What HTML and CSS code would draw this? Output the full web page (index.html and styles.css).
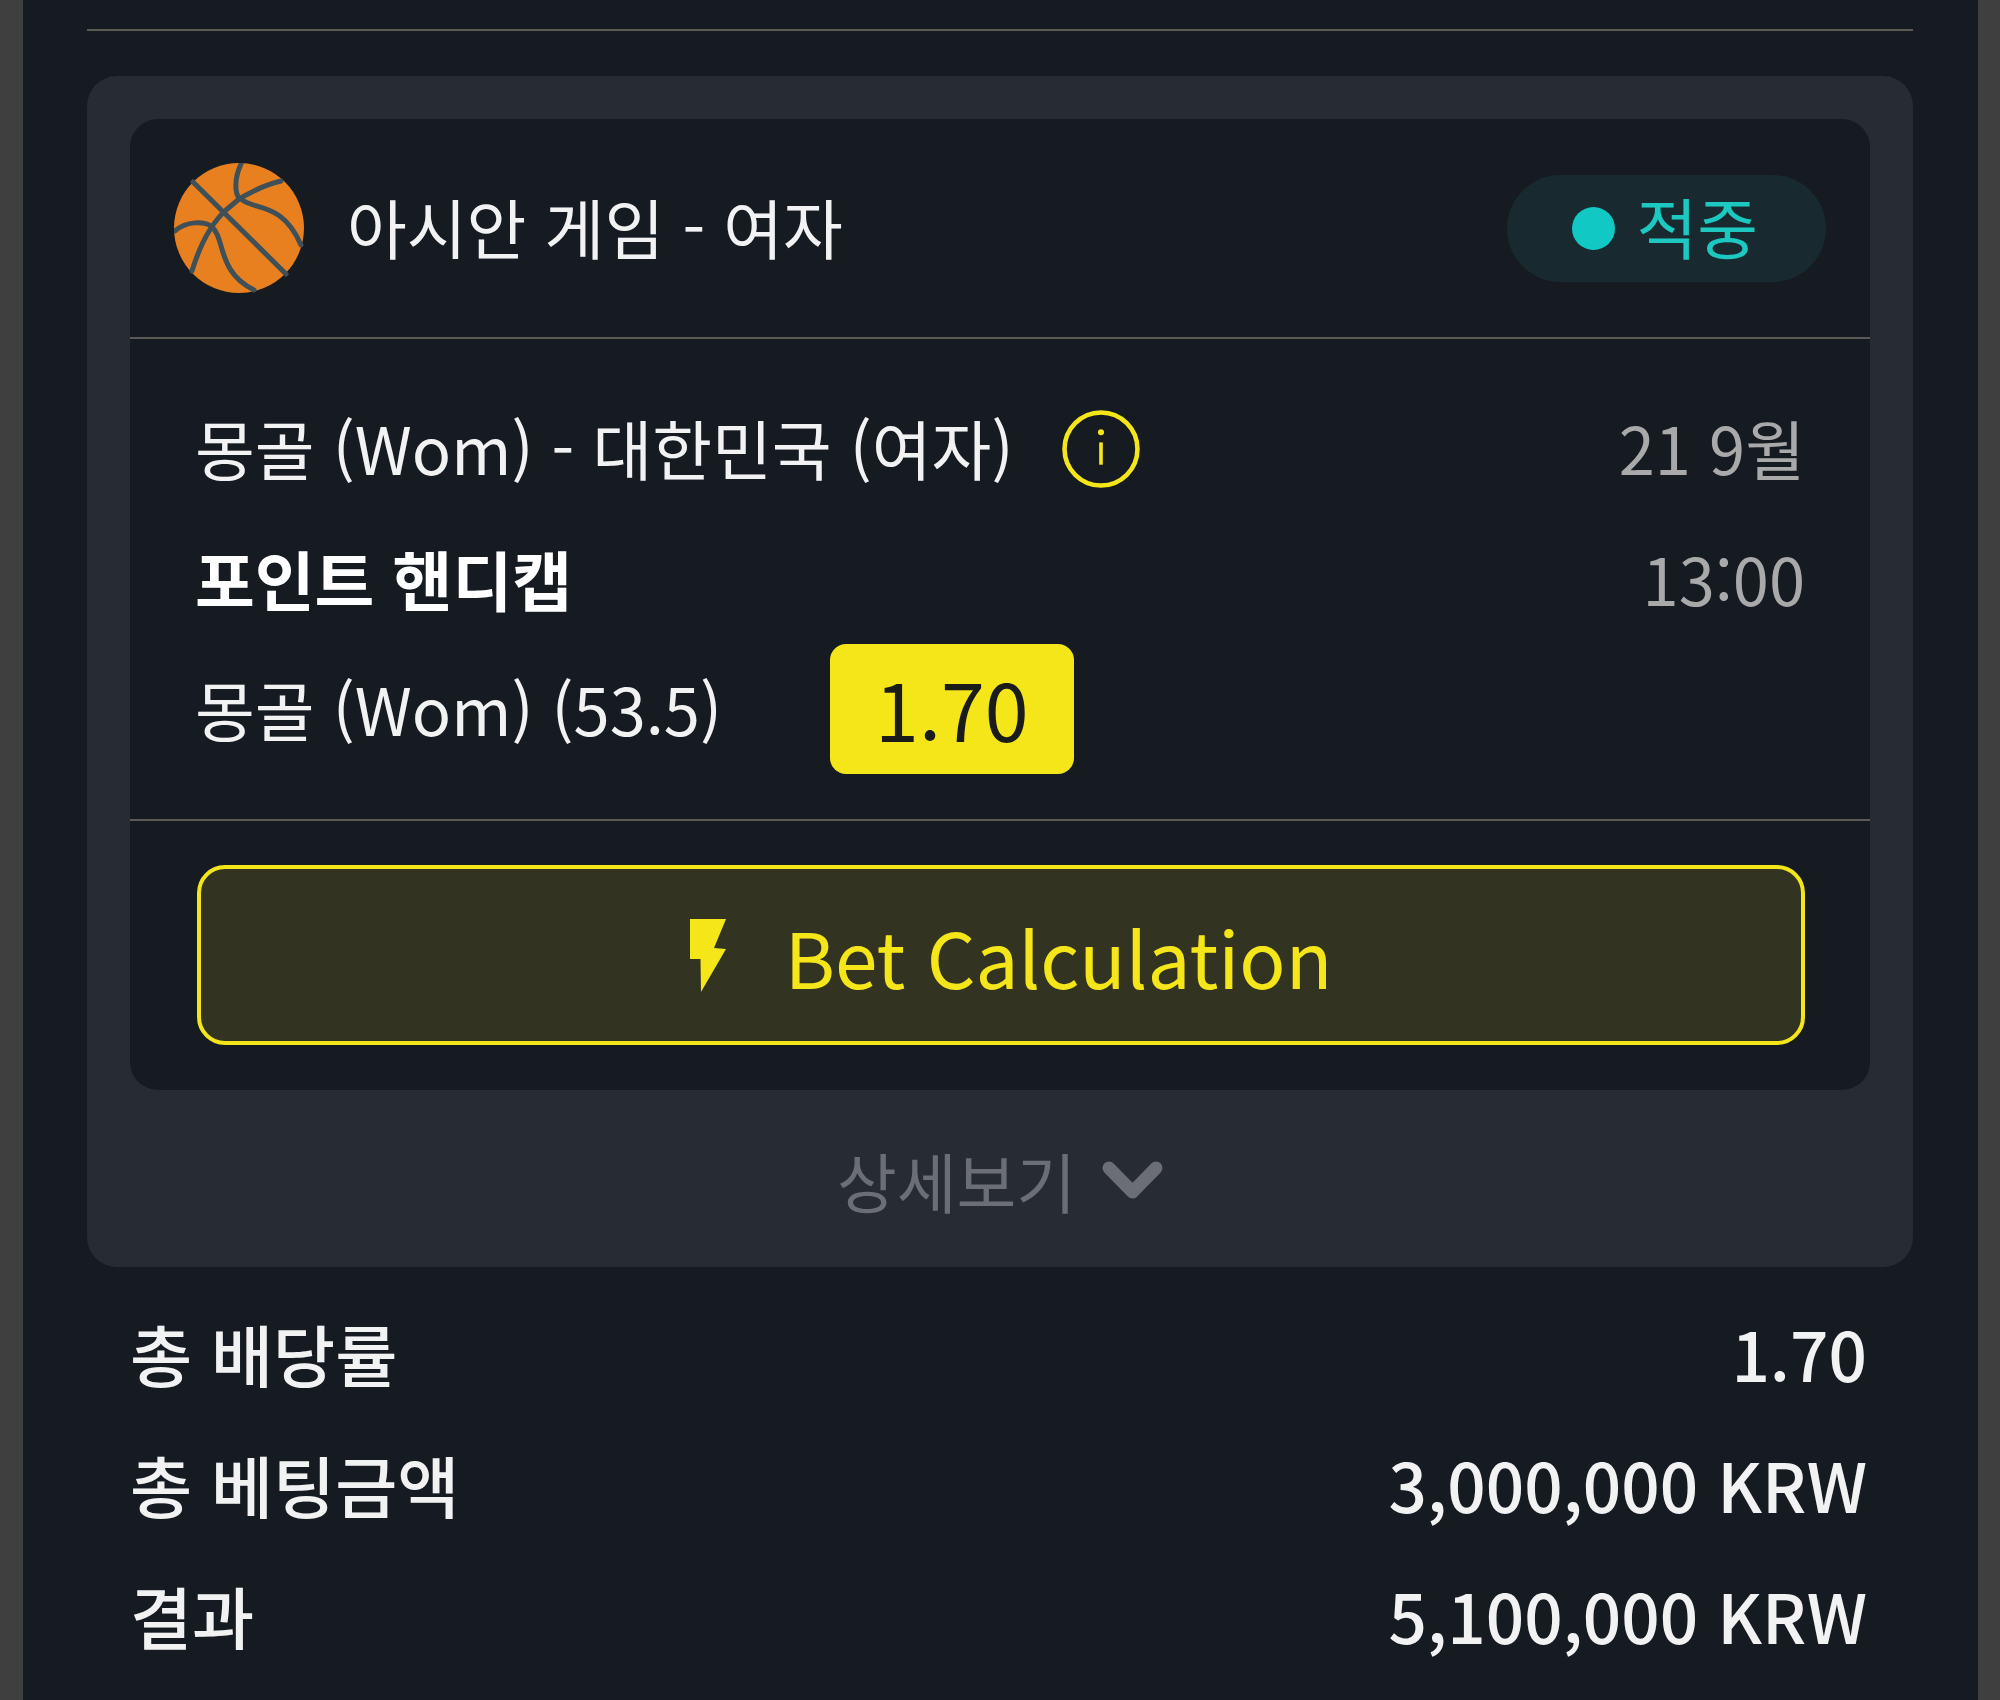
FILE: index.html
```html
<!DOCTYPE html>
<html lang="ko">
<head>
  <meta charset="UTF-8">
  <meta name="viewport" content="width=device-width, initial-scale=1.0">
  <title>Bet slip</title>
  <link rel="stylesheet" href="styles.css">
</head>
<body>
  <div class="screen">
    <div class="top-rule"></div>
    <div class="slip">
      <div class="bet">
        <div class="bet-head">
          <svg class="ball" viewBox="0 0 130 130">
            <circle cx="65" cy="65" r="65" fill="#e8801f"/>
            <g fill="none" stroke="#3f5058" stroke-width="5" stroke-linecap="round">
              <path d="M19 19 L112 111"/>
              <path d="M67 1 C60 16 61 30 65 35"/>
              <path d="M107 18 C90 22 75 30 65 36 L52 47 C40 58 28 75 18 108"/>
              <path d="M67 36 C80 48 108 38 127 82"/>
              <path d="M1 68 C12 58 30 58 37 63 C52 75 42 108 80 127"/>
            </g>
          </svg>
          <span class="league">아시안 게임 - 여자</span>
          <span class="status"><i class="status-dot"></i><span class="status-text">적중</span></span>
        </div>
        <div class="bet-body">
          <div class="bet-row">
            <span class="match">몽골 (Wom) - 대한민국 (여자)</span>
            <svg class="info" viewBox="0 0 77 77">
              <circle cx="38.5" cy="38.5" r="36" fill="none" stroke="#f5e61a" stroke-width="4.5"/>
              <circle cx="38.5" cy="22" r="3" fill="#f5e61a"/>
              <rect x="36.7" y="32" width="3.6" height="22" fill="#f5e61a"/>
            </svg>
            <span class="when">21 9월</span>
          </div>
          <div class="bet-row">
            <span class="market">포인트 핸디캡</span>
            <span class="when when-low">13:00</span>
          </div>
          <div class="bet-row">
            <span class="pick">몽골 (Wom) (53.5)</span>
            <span class="odds">1.70</span>
          </div>
        </div>
        <div class="bet-foot">
          <button class="calc">
            <svg class="bolt" viewBox="0 0 36 73">
              <path d="M0 0 H36 L24 29 L36 30 L11 73 L10.5 40 H0 Z" fill="#f5e61a"/>
            </svg>
            Bet Calculation
          </button>
        </div>
      </div>
      <div class="more">
        <span>상세보기</span>
        <svg class="chevron" viewBox="0 0 61 38">
          <path d="M7 7 L30.5 31 L54 7" fill="none" stroke="#6b6e74" stroke-width="13" stroke-linecap="round" stroke-linejoin="round"/>
        </svg>
      </div>
    </div>
    <div class="totals">
      <div class="total-row"><span>총 배당률</span><span>1.70</span></div>
      <div class="total-row"><span>총 베팅금액</span><span>3,000,000 KRW</span></div>
      <div class="total-row"><span>결과</span><span>5,100,000 KRW</span></div>
    </div>
  </div>
</body>
</html>
```

FILE: styles.css
```css
html, body {
  margin: 0;
  background: #3f3f3f;
}
body {
  font-family: "Noto Sans CJK KR", "Noto Sans", sans-serif;
  color: #f2f2f2;
}
.screen {
  margin: 0 22px 0 23px;
  height: 1700px;
  padding: 29px 65px 0 64px;
  box-sizing: border-box;
  background: #161b22;
  overflow: hidden;
}
.top-rule {
  height: 2px;
  background: #5a5954;
}
.slip {
  margin-top: 45px;
  padding: 43px 43px 0;
  height: 1191px;
  box-sizing: border-box;
  background: #272b33;
  border-radius: 30px;
}
.bet {
  height: 971px;
  background: #161b22;
  border-radius: 28px;
}
.bet-head {
  display: flex;
  align-items: center;
  height: 220px;
  padding: 0 44px;
  box-sizing: border-box;
  border-bottom: 2px solid #5a5954;
}
.ball {
  width: 130px;
  height: 130px;
  margin-right: 43px;
}
.league {
  flex: 1;
  padding-bottom: 4px;
  font-size: 65px;
}
.status {
  display: flex;
  align-items: center;
  gap: 22px;
  height: 107px;
  padding: 0 68px 0 65px;
  background: #182a30;
  border-radius: 54px;
  color: #1cc8c0;
  font-size: 66px;
}
.status-text {
  padding-bottom: 6px;
}
.status-dot {
  width: 43px;
  height: 43px;
  background: #12c8c4;
  border-radius: 50%;
}
.bet-body {
  padding: 45px 65px 0 65px;
  height: 482px;
  box-sizing: border-box;
  border-bottom: 2px solid #5a5954;
}
.bet-row {
  display: flex;
  align-items: center;
  height: 130px;
}
.match {
  padding-bottom: 4px;
  font-size: 65px;
}
.pick, .market {
  padding-bottom: 2px;
  font-size: 65px;
}
.info {
  width: 78px;
  height: 78px;
  margin-left: 49px;
}
.when {
  margin-left: auto;
  padding-bottom: 4px;
  font-size: 65px;
  color: #a9a9a9;
}
.when-low {
  padding-bottom: 2px;
}
.market {
  font-weight: 700;
  color: #fff;
}
.odds {
  margin-left: 108px;
  width: 244px;
  height: 130px;
  line-height: 128px;
  text-align: center;
  background: #f5e61a;
  border-radius: 16px;
  color: #1a1c1a;
  font-size: 79px;
}
.bet-foot {
  padding: 44px 65px 0 67px;
}
.calc {
  display: flex;
  align-items: center;
  justify-content: center;
  gap: 59px;
  width: 100%;
  height: 180px;
  padding: 0 0 0 20px;
  background: #323421;
  border: 4px solid #f5e61a;
  border-radius: 28px;
  color: #f5e61a;
  font-family: inherit;
  font-size: 76.5px;
}
.bolt {
  width: 36px;
  height: 73px;
}
.more {
  display: flex;
  align-items: center;
  justify-content: center;
  gap: 26px;
  height: 177px;
  padding-top: 2px;
  box-sizing: border-box;
  color: #6b6e74;
  font-size: 65px;
}
.chevron {
  width: 61px;
  height: 38px;
}
.totals {
  padding: 20px 46px 0 43px;
}
.total-row {
  display: flex;
  justify-content: space-between;
  align-items: center;
  height: 131px;
  font-size: 67.5px;
  font-weight: 500;
}
```
